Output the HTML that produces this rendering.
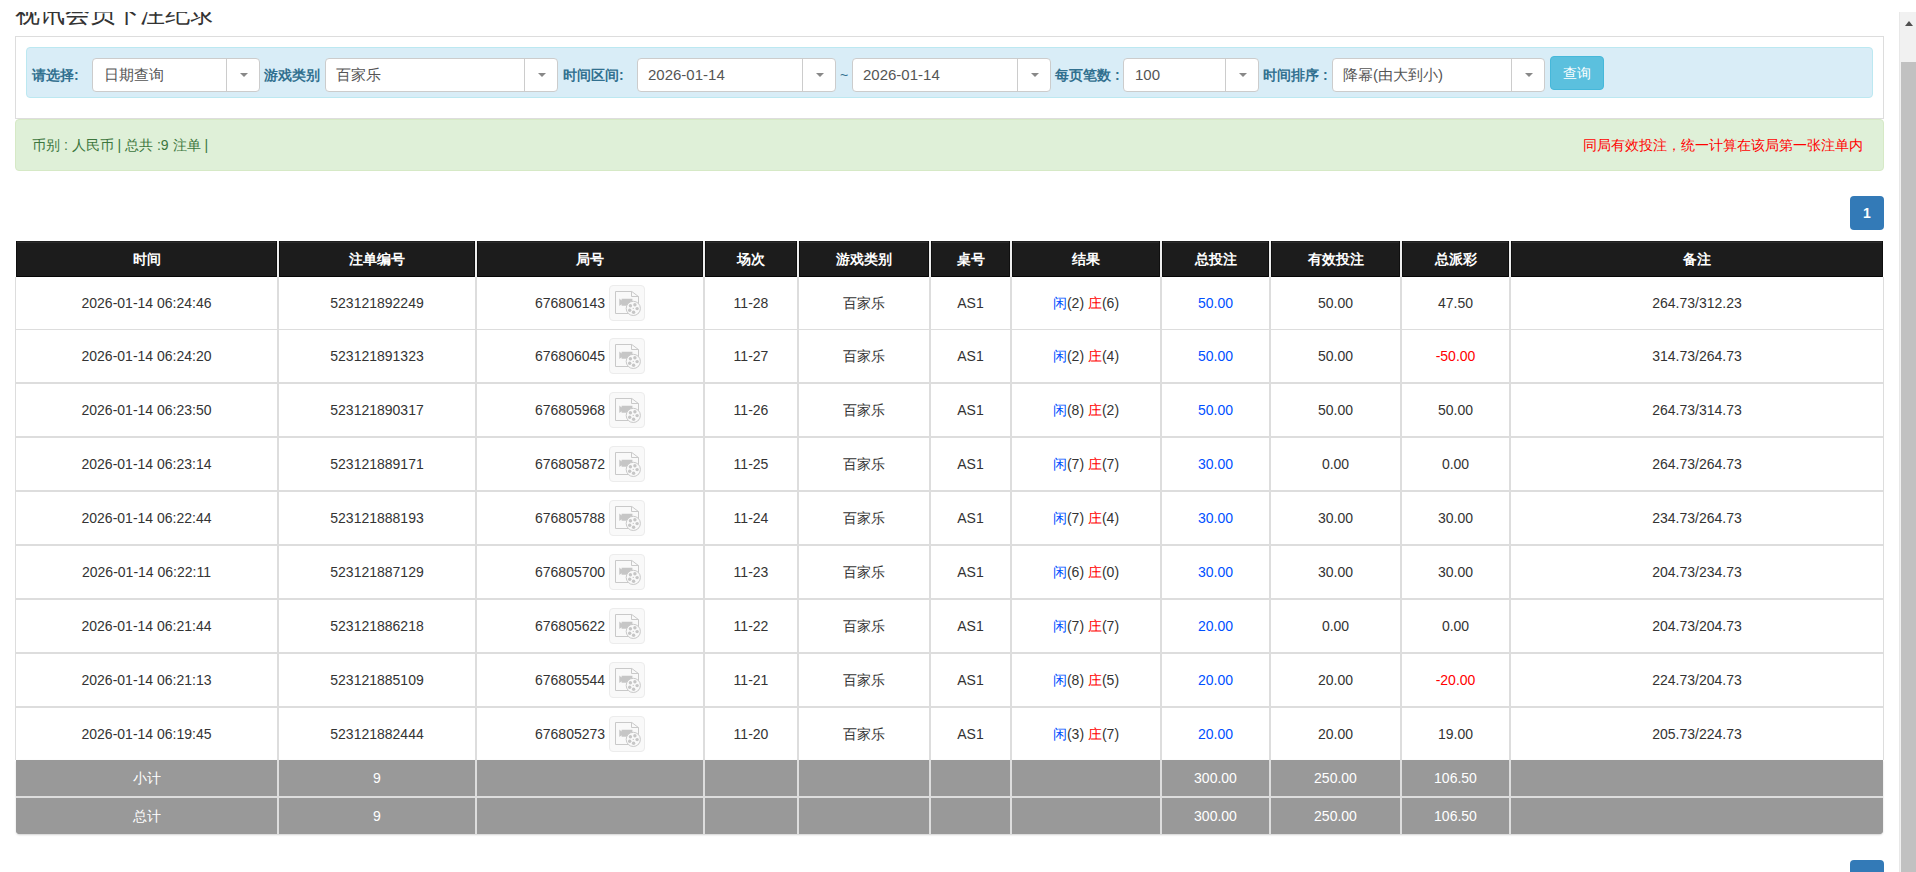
<!DOCTYPE html>
<html><head><meta charset="utf-8"><title>视讯会员下注纪录</title>
<style>
*{box-sizing:border-box;margin:0;padding:0}
html,body{width:1916px;height:872px;overflow:hidden;background:#fff}
body{position:relative;font-family:"Liberation Sans", sans-serif;color:#333;font-size:14px}
.abs{position:absolute}
.title{position:absolute;left:15px;top:-2px;font-size:25px;line-height:30px;color:#333;white-space:nowrap}
.topcover{position:absolute;left:0;top:0;width:1916px;height:12px;background:#fff}
.panel{position:absolute;left:15px;top:36px;width:1869px;height:83px;border:1px solid #ddd;background:#fff}
.info{position:absolute;left:26px;top:47px;width:1847px;height:51px;border:1px solid #bce8f1;background:#d9edf7;border-radius:4px}
.lbl{position:absolute;top:65px;height:20px;line-height:20px;font-size:14px;font-weight:bold;color:#31708f;white-space:nowrap}
.sel{position:absolute;top:58px;height:34px;border:1px solid #ccc;border-radius:4px;background:#fff}
.st{position:absolute;top:0;height:32px;line-height:32px;font-size:15px;color:#555;white-space:nowrap}
.dv{position:absolute;top:0;width:1px;height:32px;background:#ccc}
.car{position:absolute;top:0;height:32px}
.caret{position:absolute;left:50%;top:14px;margin-left:-4px;width:8px;height:5px}
.caret:before{content:'';position:absolute;left:0;top:0;width:0;height:0;border-left:4px solid transparent;border-right:4px solid transparent;border-top:4px solid #888}
.btn{position:absolute;left:1550px;top:56px;width:54px;height:34px;border:1px solid #46b8da;background:#5bc0de;border-radius:4px;color:#fff;font-size:14px;line-height:32px;text-align:center}
.alert{position:absolute;left:15px;top:119px;width:1869px;height:52px;background:#dff0d8;border:1px solid #d6e9c6;border-radius:4px;color:#3c763d;font-size:14px}
.alert .l{position:absolute;left:16px;top:15px;line-height:20px;white-space:nowrap}
.alert .r{position:absolute;right:20px;top:15px;line-height:20px;color:#f00;white-space:nowrap}
.page{position:absolute;left:1850px;width:34px;height:34px;background:#337ab7;border-radius:4px;color:#fff;font-size:14px;line-height:34px;text-align:center;font-weight:bold}
.hd{position:absolute;top:241px;height:36px;background:#1c1c1c;color:#fff;font-weight:bold;font-size:14px;line-height:36px;text-align:center;box-shadow:inset 1px 0 0 #0f0f0f,inset -1px 0 0 #0f0f0f,inset 0 -1px 0 #050505,inset 0 1px 0 #1f1f1f,inset 0 2px 0 #2a2a2a}
.c{position:absolute;height:52px;line-height:52px;text-align:center;white-space:nowrap;background:#fff}
.f{position:absolute;height:36px;line-height:36px;text-align:center;white-space:nowrap;background:#999;color:#fff}
.foot{position:absolute;left:16px;top:760px;width:1867px;height:74px;border-radius:0 0 4px 4px;overflow:hidden;background:#999;box-shadow:0 1px 2px rgba(0,0,0,.18)}
.vl{position:absolute;width:2px;background:#ddd}
.hl{position:absolute;left:16px;width:1867px;background:#ddd}
.ic{display:inline-block;vertical-align:middle;width:36px;height:36px;border:1px solid #ececec;border-radius:4px;background:#f9f9f9;position:relative;margin-top:-3px}
.ic svg{position:absolute;left:-1px;top:-1px}
.b{color:#0050ff}
.r{color:#f00}
.sb{position:absolute;left:1899px;top:12px;width:17px;height:860px;background:#f1f1f1;border-left:1px solid #e8e8e8}
.thumb{position:absolute;left:1901px;top:62px;width:15px;height:810px;background:#c1c1c1}
.uparr{position:absolute;left:1905px;top:21px;width:0;height:0;border-left:4.5px solid transparent;border-right:4.5px solid transparent;border-bottom:5px solid #505050}
</style></head><body>

<div class="title">视讯会员下注纪录</div>
<div class="topcover"></div>
<div class="panel"></div>
<div class="info"></div>
<div class="lbl" style="left:32px">请选择:</div>
<div class="sel" style="left:92px;width:168px"><span class="st" style="left:11px">日期查询</span><span class="dv" style="left:133px"></span><span class="car" style="left:134px;width:33px"><i class="caret"></i></span></div>
<div class="lbl" style="left:264px">游戏类别</div>
<div class="sel" style="left:325px;width:233px"><span class="st" style="left:10px">百家乐</span><span class="dv" style="left:198px"></span><span class="car" style="left:199px;width:33px"><i class="caret"></i></span></div>
<div class="lbl" style="left:563px">时间区间:</div>
<div class="sel" style="left:637px;width:199px"><span class="st" style="left:10px">2026-01-14</span><span class="dv" style="left:164px"></span><span class="car" style="left:165px;width:33px"><i class="caret"></i></span></div>
<div class="lbl" style="left:840px;font-weight:normal">~</div>
<div class="sel" style="left:852px;width:199px"><span class="st" style="left:10px">2026-01-14</span><span class="dv" style="left:164px"></span><span class="car" style="left:165px;width:33px"><i class="caret"></i></span></div>
<div class="lbl" style="left:1055px">每页笔数 :</div>
<div class="sel" style="left:1123px;width:136px"><span class="st" style="left:11px">100</span><span class="dv" style="left:101px"></span><span class="car" style="left:102px;width:33px"><i class="caret"></i></span></div>
<div class="lbl" style="left:1263px">时间排序 :</div>
<div class="sel" style="left:1332px;width:213px"><span class="st" style="left:10px">降幂(由大到小)</span><span class="dv" style="left:178px"></span><span class="car" style="left:179px;width:33px"><i class="caret"></i></span></div>
<div class="btn">查询</div>
<div class="alert"><span class="l">币别 : 人民币 | 总共 :9 注单 |</span><span class="r">同局有效投注，统一计算在该局第一张注单内</span></div>
<div class="page" style="top:196px">1</div>
<div class="vl" style="left:15px;width:1px;top:277px;height:483px"></div>
<div class="vl" style="left:1883px;width:1px;top:277px;height:483px"></div>
<div class="hd" style="left:16px;width:261px">时间</div>
<div class="hd" style="left:279px;width:196px">注单编号</div>
<div class="hd" style="left:477px;width:226px">局号</div>
<div class="hd" style="left:705px;width:92px">场次</div>
<div class="hd" style="left:799px;width:130px">游戏类别</div>
<div class="hd" style="left:931px;width:79px">桌号</div>
<div class="hd" style="left:1012px;width:148px">结果</div>
<div class="hd" style="left:1162px;width:107px">总投注</div>
<div class="hd" style="left:1271px;width:129px">有效投注</div>
<div class="hd" style="left:1402px;width:107px">总派彩</div>
<div class="hd" style="left:1511px;width:372px">备注</div>
<div class="vl" style="left:277px;top:241px;height:36px;background:#eee"></div>
<div class="vl" style="left:475px;top:241px;height:36px;background:#eee"></div>
<div class="vl" style="left:703px;top:241px;height:36px;background:#eee"></div>
<div class="vl" style="left:797px;top:241px;height:36px;background:#eee"></div>
<div class="vl" style="left:929px;top:241px;height:36px;background:#eee"></div>
<div class="vl" style="left:1010px;top:241px;height:36px;background:#eee"></div>
<div class="vl" style="left:1160px;top:241px;height:36px;background:#eee"></div>
<div class="vl" style="left:1269px;top:241px;height:36px;background:#eee"></div>
<div class="vl" style="left:1400px;top:241px;height:36px;background:#eee"></div>
<div class="vl" style="left:1509px;top:241px;height:36px;background:#eee"></div>
<div class="c" style="left:16px;width:261px;top:277px">2026-01-14 06:24:46</div>
<div class="c" style="left:279px;width:196px;top:277px">523121892249</div>
<div class="c" style="left:477px;width:226px;top:277px">676806143 <span class="ic"><svg width="36" height="36" viewBox="0 0 36 36"><path d="M6.5 6.5H22.8L29.5 11.6V28.5H6.5Z" fill="#f9f9f9" stroke="#c9c9c9" stroke-width="1"/><path d="M22.5 6.5V11.5H29.5" fill="none" stroke="#c9c9c9" stroke-width="1"/><path d="M10.3 13.6L12.6 15.6V13.8H23.4V20.8H12.6V19.2L10.3 21Z" fill="#c6c6c6"/><circle cx="24.3" cy="23.4" r="7.1" fill="#f9f9f9" stroke="#c9c9c9" stroke-width="1"/><circle cx="21.4" cy="20.7" r="1.7" fill="#c6c6c6"/><circle cx="25.9" cy="19.8" r="1.7" fill="#c6c6c6"/><circle cx="28.1" cy="23.6" r="1.7" fill="#c6c6c6"/><circle cx="24.6" cy="27.2" r="1.7" fill="#c6c6c6"/><circle cx="20.7" cy="25.3" r="1.7" fill="#c6c6c6"/><rect x="23.6" y="22.9" width="1.4" height="0.9" fill="#c6c6c6"/></svg></span></div>
<div class="c" style="left:705px;width:92px;top:277px">11-28</div>
<div class="c" style="left:799px;width:130px;top:277px">百家乐</div>
<div class="c" style="left:931px;width:79px;top:277px">AS1</div>
<div class="c" style="left:1012px;width:148px;top:277px"><span class="b">闲</span>(2) <span class="r">庄</span>(6)</div>
<div class="c" style="left:1162px;width:107px;top:277px"><span class="b">50.00</span></div>
<div class="c" style="left:1271px;width:129px;top:277px">50.00</div>
<div class="c" style="left:1402px;width:107px;top:277px">47.50</div>
<div class="c" style="left:1511px;width:372px;top:277px">264.73/312.23</div>
<div class="c" style="left:16px;width:261px;top:330px">2026-01-14 06:24:20</div>
<div class="c" style="left:279px;width:196px;top:330px">523121891323</div>
<div class="c" style="left:477px;width:226px;top:330px">676806045 <span class="ic"><svg width="36" height="36" viewBox="0 0 36 36"><path d="M6.5 6.5H22.8L29.5 11.6V28.5H6.5Z" fill="#f9f9f9" stroke="#c9c9c9" stroke-width="1"/><path d="M22.5 6.5V11.5H29.5" fill="none" stroke="#c9c9c9" stroke-width="1"/><path d="M10.3 13.6L12.6 15.6V13.8H23.4V20.8H12.6V19.2L10.3 21Z" fill="#c6c6c6"/><circle cx="24.3" cy="23.4" r="7.1" fill="#f9f9f9" stroke="#c9c9c9" stroke-width="1"/><circle cx="21.4" cy="20.7" r="1.7" fill="#c6c6c6"/><circle cx="25.9" cy="19.8" r="1.7" fill="#c6c6c6"/><circle cx="28.1" cy="23.6" r="1.7" fill="#c6c6c6"/><circle cx="24.6" cy="27.2" r="1.7" fill="#c6c6c6"/><circle cx="20.7" cy="25.3" r="1.7" fill="#c6c6c6"/><rect x="23.6" y="22.9" width="1.4" height="0.9" fill="#c6c6c6"/></svg></span></div>
<div class="c" style="left:705px;width:92px;top:330px">11-27</div>
<div class="c" style="left:799px;width:130px;top:330px">百家乐</div>
<div class="c" style="left:931px;width:79px;top:330px">AS1</div>
<div class="c" style="left:1012px;width:148px;top:330px"><span class="b">闲</span>(2) <span class="r">庄</span>(4)</div>
<div class="c" style="left:1162px;width:107px;top:330px"><span class="b">50.00</span></div>
<div class="c" style="left:1271px;width:129px;top:330px">50.00</div>
<div class="c" style="left:1402px;width:107px;top:330px"><span class="r">-50.00</span></div>
<div class="c" style="left:1511px;width:372px;top:330px">314.73/264.73</div>
<div class="c" style="left:16px;width:261px;top:384px">2026-01-14 06:23:50</div>
<div class="c" style="left:279px;width:196px;top:384px">523121890317</div>
<div class="c" style="left:477px;width:226px;top:384px">676805968 <span class="ic"><svg width="36" height="36" viewBox="0 0 36 36"><path d="M6.5 6.5H22.8L29.5 11.6V28.5H6.5Z" fill="#f9f9f9" stroke="#c9c9c9" stroke-width="1"/><path d="M22.5 6.5V11.5H29.5" fill="none" stroke="#c9c9c9" stroke-width="1"/><path d="M10.3 13.6L12.6 15.6V13.8H23.4V20.8H12.6V19.2L10.3 21Z" fill="#c6c6c6"/><circle cx="24.3" cy="23.4" r="7.1" fill="#f9f9f9" stroke="#c9c9c9" stroke-width="1"/><circle cx="21.4" cy="20.7" r="1.7" fill="#c6c6c6"/><circle cx="25.9" cy="19.8" r="1.7" fill="#c6c6c6"/><circle cx="28.1" cy="23.6" r="1.7" fill="#c6c6c6"/><circle cx="24.6" cy="27.2" r="1.7" fill="#c6c6c6"/><circle cx="20.7" cy="25.3" r="1.7" fill="#c6c6c6"/><rect x="23.6" y="22.9" width="1.4" height="0.9" fill="#c6c6c6"/></svg></span></div>
<div class="c" style="left:705px;width:92px;top:384px">11-26</div>
<div class="c" style="left:799px;width:130px;top:384px">百家乐</div>
<div class="c" style="left:931px;width:79px;top:384px">AS1</div>
<div class="c" style="left:1012px;width:148px;top:384px"><span class="b">闲</span>(8) <span class="r">庄</span>(2)</div>
<div class="c" style="left:1162px;width:107px;top:384px"><span class="b">50.00</span></div>
<div class="c" style="left:1271px;width:129px;top:384px">50.00</div>
<div class="c" style="left:1402px;width:107px;top:384px">50.00</div>
<div class="c" style="left:1511px;width:372px;top:384px">264.73/314.73</div>
<div class="c" style="left:16px;width:261px;top:438px">2026-01-14 06:23:14</div>
<div class="c" style="left:279px;width:196px;top:438px">523121889171</div>
<div class="c" style="left:477px;width:226px;top:438px">676805872 <span class="ic"><svg width="36" height="36" viewBox="0 0 36 36"><path d="M6.5 6.5H22.8L29.5 11.6V28.5H6.5Z" fill="#f9f9f9" stroke="#c9c9c9" stroke-width="1"/><path d="M22.5 6.5V11.5H29.5" fill="none" stroke="#c9c9c9" stroke-width="1"/><path d="M10.3 13.6L12.6 15.6V13.8H23.4V20.8H12.6V19.2L10.3 21Z" fill="#c6c6c6"/><circle cx="24.3" cy="23.4" r="7.1" fill="#f9f9f9" stroke="#c9c9c9" stroke-width="1"/><circle cx="21.4" cy="20.7" r="1.7" fill="#c6c6c6"/><circle cx="25.9" cy="19.8" r="1.7" fill="#c6c6c6"/><circle cx="28.1" cy="23.6" r="1.7" fill="#c6c6c6"/><circle cx="24.6" cy="27.2" r="1.7" fill="#c6c6c6"/><circle cx="20.7" cy="25.3" r="1.7" fill="#c6c6c6"/><rect x="23.6" y="22.9" width="1.4" height="0.9" fill="#c6c6c6"/></svg></span></div>
<div class="c" style="left:705px;width:92px;top:438px">11-25</div>
<div class="c" style="left:799px;width:130px;top:438px">百家乐</div>
<div class="c" style="left:931px;width:79px;top:438px">AS1</div>
<div class="c" style="left:1012px;width:148px;top:438px"><span class="b">闲</span>(7) <span class="r">庄</span>(7)</div>
<div class="c" style="left:1162px;width:107px;top:438px"><span class="b">30.00</span></div>
<div class="c" style="left:1271px;width:129px;top:438px">0.00</div>
<div class="c" style="left:1402px;width:107px;top:438px">0.00</div>
<div class="c" style="left:1511px;width:372px;top:438px">264.73/264.73</div>
<div class="c" style="left:16px;width:261px;top:492px">2026-01-14 06:22:44</div>
<div class="c" style="left:279px;width:196px;top:492px">523121888193</div>
<div class="c" style="left:477px;width:226px;top:492px">676805788 <span class="ic"><svg width="36" height="36" viewBox="0 0 36 36"><path d="M6.5 6.5H22.8L29.5 11.6V28.5H6.5Z" fill="#f9f9f9" stroke="#c9c9c9" stroke-width="1"/><path d="M22.5 6.5V11.5H29.5" fill="none" stroke="#c9c9c9" stroke-width="1"/><path d="M10.3 13.6L12.6 15.6V13.8H23.4V20.8H12.6V19.2L10.3 21Z" fill="#c6c6c6"/><circle cx="24.3" cy="23.4" r="7.1" fill="#f9f9f9" stroke="#c9c9c9" stroke-width="1"/><circle cx="21.4" cy="20.7" r="1.7" fill="#c6c6c6"/><circle cx="25.9" cy="19.8" r="1.7" fill="#c6c6c6"/><circle cx="28.1" cy="23.6" r="1.7" fill="#c6c6c6"/><circle cx="24.6" cy="27.2" r="1.7" fill="#c6c6c6"/><circle cx="20.7" cy="25.3" r="1.7" fill="#c6c6c6"/><rect x="23.6" y="22.9" width="1.4" height="0.9" fill="#c6c6c6"/></svg></span></div>
<div class="c" style="left:705px;width:92px;top:492px">11-24</div>
<div class="c" style="left:799px;width:130px;top:492px">百家乐</div>
<div class="c" style="left:931px;width:79px;top:492px">AS1</div>
<div class="c" style="left:1012px;width:148px;top:492px"><span class="b">闲</span>(7) <span class="r">庄</span>(4)</div>
<div class="c" style="left:1162px;width:107px;top:492px"><span class="b">30.00</span></div>
<div class="c" style="left:1271px;width:129px;top:492px">30.00</div>
<div class="c" style="left:1402px;width:107px;top:492px">30.00</div>
<div class="c" style="left:1511px;width:372px;top:492px">234.73/264.73</div>
<div class="c" style="left:16px;width:261px;top:546px">2026-01-14 06:22:11</div>
<div class="c" style="left:279px;width:196px;top:546px">523121887129</div>
<div class="c" style="left:477px;width:226px;top:546px">676805700 <span class="ic"><svg width="36" height="36" viewBox="0 0 36 36"><path d="M6.5 6.5H22.8L29.5 11.6V28.5H6.5Z" fill="#f9f9f9" stroke="#c9c9c9" stroke-width="1"/><path d="M22.5 6.5V11.5H29.5" fill="none" stroke="#c9c9c9" stroke-width="1"/><path d="M10.3 13.6L12.6 15.6V13.8H23.4V20.8H12.6V19.2L10.3 21Z" fill="#c6c6c6"/><circle cx="24.3" cy="23.4" r="7.1" fill="#f9f9f9" stroke="#c9c9c9" stroke-width="1"/><circle cx="21.4" cy="20.7" r="1.7" fill="#c6c6c6"/><circle cx="25.9" cy="19.8" r="1.7" fill="#c6c6c6"/><circle cx="28.1" cy="23.6" r="1.7" fill="#c6c6c6"/><circle cx="24.6" cy="27.2" r="1.7" fill="#c6c6c6"/><circle cx="20.7" cy="25.3" r="1.7" fill="#c6c6c6"/><rect x="23.6" y="22.9" width="1.4" height="0.9" fill="#c6c6c6"/></svg></span></div>
<div class="c" style="left:705px;width:92px;top:546px">11-23</div>
<div class="c" style="left:799px;width:130px;top:546px">百家乐</div>
<div class="c" style="left:931px;width:79px;top:546px">AS1</div>
<div class="c" style="left:1012px;width:148px;top:546px"><span class="b">闲</span>(6) <span class="r">庄</span>(0)</div>
<div class="c" style="left:1162px;width:107px;top:546px"><span class="b">30.00</span></div>
<div class="c" style="left:1271px;width:129px;top:546px">30.00</div>
<div class="c" style="left:1402px;width:107px;top:546px">30.00</div>
<div class="c" style="left:1511px;width:372px;top:546px">204.73/234.73</div>
<div class="c" style="left:16px;width:261px;top:600px">2026-01-14 06:21:44</div>
<div class="c" style="left:279px;width:196px;top:600px">523121886218</div>
<div class="c" style="left:477px;width:226px;top:600px">676805622 <span class="ic"><svg width="36" height="36" viewBox="0 0 36 36"><path d="M6.5 6.5H22.8L29.5 11.6V28.5H6.5Z" fill="#f9f9f9" stroke="#c9c9c9" stroke-width="1"/><path d="M22.5 6.5V11.5H29.5" fill="none" stroke="#c9c9c9" stroke-width="1"/><path d="M10.3 13.6L12.6 15.6V13.8H23.4V20.8H12.6V19.2L10.3 21Z" fill="#c6c6c6"/><circle cx="24.3" cy="23.4" r="7.1" fill="#f9f9f9" stroke="#c9c9c9" stroke-width="1"/><circle cx="21.4" cy="20.7" r="1.7" fill="#c6c6c6"/><circle cx="25.9" cy="19.8" r="1.7" fill="#c6c6c6"/><circle cx="28.1" cy="23.6" r="1.7" fill="#c6c6c6"/><circle cx="24.6" cy="27.2" r="1.7" fill="#c6c6c6"/><circle cx="20.7" cy="25.3" r="1.7" fill="#c6c6c6"/><rect x="23.6" y="22.9" width="1.4" height="0.9" fill="#c6c6c6"/></svg></span></div>
<div class="c" style="left:705px;width:92px;top:600px">11-22</div>
<div class="c" style="left:799px;width:130px;top:600px">百家乐</div>
<div class="c" style="left:931px;width:79px;top:600px">AS1</div>
<div class="c" style="left:1012px;width:148px;top:600px"><span class="b">闲</span>(7) <span class="r">庄</span>(7)</div>
<div class="c" style="left:1162px;width:107px;top:600px"><span class="b">20.00</span></div>
<div class="c" style="left:1271px;width:129px;top:600px">0.00</div>
<div class="c" style="left:1402px;width:107px;top:600px">0.00</div>
<div class="c" style="left:1511px;width:372px;top:600px">204.73/204.73</div>
<div class="c" style="left:16px;width:261px;top:654px">2026-01-14 06:21:13</div>
<div class="c" style="left:279px;width:196px;top:654px">523121885109</div>
<div class="c" style="left:477px;width:226px;top:654px">676805544 <span class="ic"><svg width="36" height="36" viewBox="0 0 36 36"><path d="M6.5 6.5H22.8L29.5 11.6V28.5H6.5Z" fill="#f9f9f9" stroke="#c9c9c9" stroke-width="1"/><path d="M22.5 6.5V11.5H29.5" fill="none" stroke="#c9c9c9" stroke-width="1"/><path d="M10.3 13.6L12.6 15.6V13.8H23.4V20.8H12.6V19.2L10.3 21Z" fill="#c6c6c6"/><circle cx="24.3" cy="23.4" r="7.1" fill="#f9f9f9" stroke="#c9c9c9" stroke-width="1"/><circle cx="21.4" cy="20.7" r="1.7" fill="#c6c6c6"/><circle cx="25.9" cy="19.8" r="1.7" fill="#c6c6c6"/><circle cx="28.1" cy="23.6" r="1.7" fill="#c6c6c6"/><circle cx="24.6" cy="27.2" r="1.7" fill="#c6c6c6"/><circle cx="20.7" cy="25.3" r="1.7" fill="#c6c6c6"/><rect x="23.6" y="22.9" width="1.4" height="0.9" fill="#c6c6c6"/></svg></span></div>
<div class="c" style="left:705px;width:92px;top:654px">11-21</div>
<div class="c" style="left:799px;width:130px;top:654px">百家乐</div>
<div class="c" style="left:931px;width:79px;top:654px">AS1</div>
<div class="c" style="left:1012px;width:148px;top:654px"><span class="b">闲</span>(8) <span class="r">庄</span>(5)</div>
<div class="c" style="left:1162px;width:107px;top:654px"><span class="b">20.00</span></div>
<div class="c" style="left:1271px;width:129px;top:654px">20.00</div>
<div class="c" style="left:1402px;width:107px;top:654px"><span class="r">-20.00</span></div>
<div class="c" style="left:1511px;width:372px;top:654px">224.73/204.73</div>
<div class="c" style="left:16px;width:261px;top:708px">2026-01-14 06:19:45</div>
<div class="c" style="left:279px;width:196px;top:708px">523121882444</div>
<div class="c" style="left:477px;width:226px;top:708px">676805273 <span class="ic"><svg width="36" height="36" viewBox="0 0 36 36"><path d="M6.5 6.5H22.8L29.5 11.6V28.5H6.5Z" fill="#f9f9f9" stroke="#c9c9c9" stroke-width="1"/><path d="M22.5 6.5V11.5H29.5" fill="none" stroke="#c9c9c9" stroke-width="1"/><path d="M10.3 13.6L12.6 15.6V13.8H23.4V20.8H12.6V19.2L10.3 21Z" fill="#c6c6c6"/><circle cx="24.3" cy="23.4" r="7.1" fill="#f9f9f9" stroke="#c9c9c9" stroke-width="1"/><circle cx="21.4" cy="20.7" r="1.7" fill="#c6c6c6"/><circle cx="25.9" cy="19.8" r="1.7" fill="#c6c6c6"/><circle cx="28.1" cy="23.6" r="1.7" fill="#c6c6c6"/><circle cx="24.6" cy="27.2" r="1.7" fill="#c6c6c6"/><circle cx="20.7" cy="25.3" r="1.7" fill="#c6c6c6"/><rect x="23.6" y="22.9" width="1.4" height="0.9" fill="#c6c6c6"/></svg></span></div>
<div class="c" style="left:705px;width:92px;top:708px">11-20</div>
<div class="c" style="left:799px;width:130px;top:708px">百家乐</div>
<div class="c" style="left:931px;width:79px;top:708px">AS1</div>
<div class="c" style="left:1012px;width:148px;top:708px"><span class="b">闲</span>(3) <span class="r">庄</span>(7)</div>
<div class="c" style="left:1162px;width:107px;top:708px"><span class="b">20.00</span></div>
<div class="c" style="left:1271px;width:129px;top:708px">20.00</div>
<div class="c" style="left:1402px;width:107px;top:708px">19.00</div>
<div class="c" style="left:1511px;width:372px;top:708px">205.73/224.73</div>
<div class="hl" style="top:329px;height:1px"></div>
<div class="hl" style="top:382px;height:2px"></div>
<div class="hl" style="top:436px;height:2px"></div>
<div class="hl" style="top:490px;height:2px"></div>
<div class="hl" style="top:544px;height:2px"></div>
<div class="hl" style="top:598px;height:2px"></div>
<div class="hl" style="top:652px;height:2px"></div>
<div class="hl" style="top:706px;height:2px"></div>
<div class="vl" style="left:277px;top:277px;height:483px"></div>
<div class="vl" style="left:475px;top:277px;height:483px"></div>
<div class="vl" style="left:703px;top:277px;height:483px"></div>
<div class="vl" style="left:797px;top:277px;height:483px"></div>
<div class="vl" style="left:929px;top:277px;height:483px"></div>
<div class="vl" style="left:1010px;top:277px;height:483px"></div>
<div class="vl" style="left:1160px;top:277px;height:483px"></div>
<div class="vl" style="left:1269px;top:277px;height:483px"></div>
<div class="vl" style="left:1400px;top:277px;height:483px"></div>
<div class="vl" style="left:1509px;top:277px;height:483px"></div>
<div class="foot">
<div class="f" style="left:0px;width:261px;top:0px">小计</div>
<div class="f" style="left:263px;width:196px;top:0px">9</div>
<div class="f" style="left:461px;width:226px;top:0px"></div>
<div class="f" style="left:689px;width:92px;top:0px"></div>
<div class="f" style="left:783px;width:130px;top:0px"></div>
<div class="f" style="left:915px;width:79px;top:0px"></div>
<div class="f" style="left:996px;width:148px;top:0px"></div>
<div class="f" style="left:1146px;width:107px;top:0px">300.00</div>
<div class="f" style="left:1255px;width:129px;top:0px">250.00</div>
<div class="f" style="left:1386px;width:107px;top:0px">106.50</div>
<div class="f" style="left:1495px;width:372px;top:0px"></div>
<div class="f" style="left:0px;width:261px;top:38px">总计</div>
<div class="f" style="left:263px;width:196px;top:38px">9</div>
<div class="f" style="left:461px;width:226px;top:38px"></div>
<div class="f" style="left:689px;width:92px;top:38px"></div>
<div class="f" style="left:783px;width:130px;top:38px"></div>
<div class="f" style="left:915px;width:79px;top:38px"></div>
<div class="f" style="left:996px;width:148px;top:38px"></div>
<div class="f" style="left:1146px;width:107px;top:38px">300.00</div>
<div class="f" style="left:1255px;width:129px;top:38px">250.00</div>
<div class="f" style="left:1386px;width:107px;top:38px">106.50</div>
<div class="f" style="left:1495px;width:372px;top:38px"></div>
<div class="abs" style="left:0;top:36px;width:1867px;height:2px;background:#ddd"></div>
<div class="vl" style="left:261px;top:0;height:74px"></div>
<div class="vl" style="left:459px;top:0;height:74px"></div>
<div class="vl" style="left:687px;top:0;height:74px"></div>
<div class="vl" style="left:781px;top:0;height:74px"></div>
<div class="vl" style="left:913px;top:0;height:74px"></div>
<div class="vl" style="left:994px;top:0;height:74px"></div>
<div class="vl" style="left:1144px;top:0;height:74px"></div>
<div class="vl" style="left:1253px;top:0;height:74px"></div>
<div class="vl" style="left:1384px;top:0;height:74px"></div>
<div class="vl" style="left:1493px;top:0;height:74px"></div>
</div>
<div class="page" style="top:860px"></div>
<div class="sb"></div><div class="thumb"></div><div class="uparr"></div>
</body></html>
